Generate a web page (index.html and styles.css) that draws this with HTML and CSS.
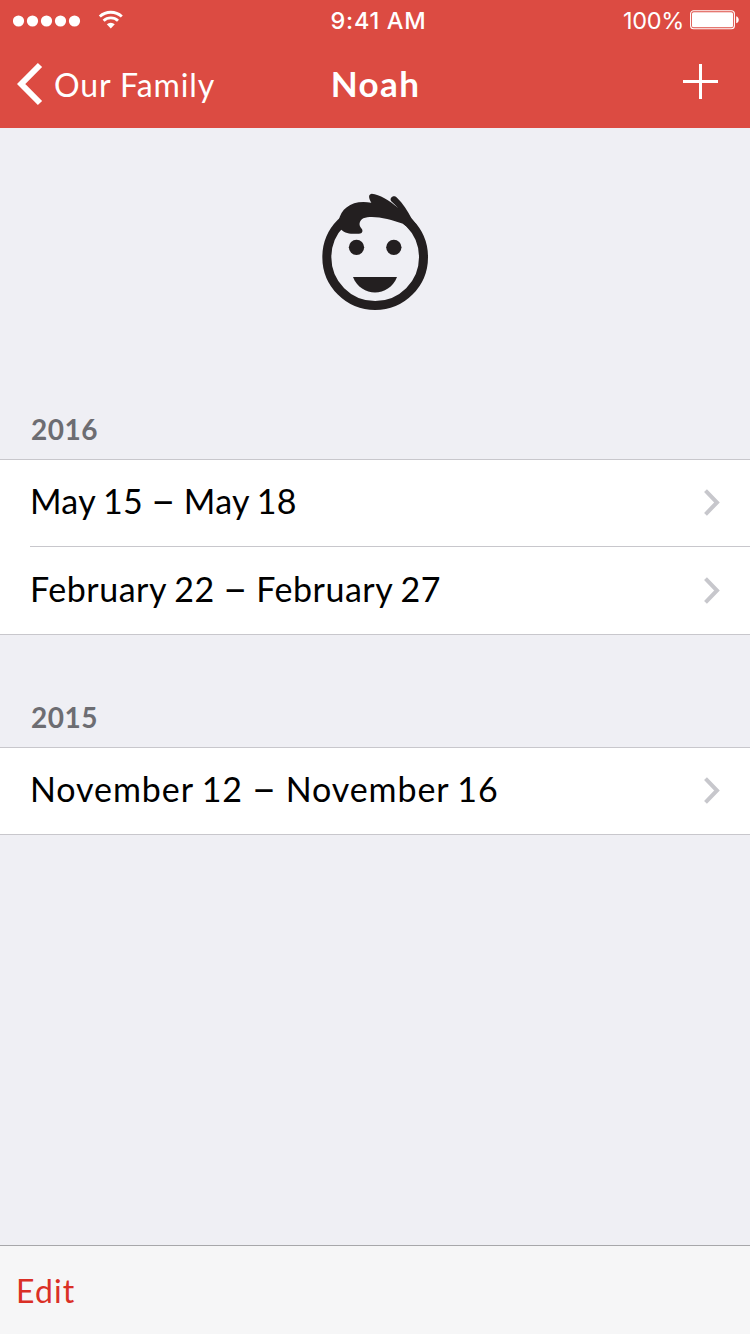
FILE: index.html
```html
<!DOCTYPE html>
<html lang="en">
<head>
    <meta charset="UTF-8">
    <meta name="viewport" content="width=device-width, initial-scale=1.0">
    <title>Noah</title>
    <link rel="stylesheet" href="styles.css">
</head>
<body>

    <header class="header">
        <div class="status-bar">
            <div class="status-left">
                <svg class="signal" width="68" height="12" viewBox="0 0 68 12" fill="#fff">
                    <circle cx="5.5" cy="6" r="5.6"/>
                    <circle cx="19.5" cy="6" r="5.6"/>
                    <circle cx="33.5" cy="6" r="5.6"/>
                    <circle cx="47.5" cy="6" r="5.6"/>
                    <circle cx="61.5" cy="6" r="5.6"/>
                </svg>
                <svg class="wifi" width="26" height="19" viewBox="0 0 26 19" fill="none" stroke="#fff" stroke-width="2.9">
                    <path d="M1.8 6.5 A16.3 16.3 0 0 1 23.8 6.5"/>
                    <path d="M5.6 10.7 A10.6 10.6 0 0 1 20 10.7"/>
                    <path d="M12.8 18.4 L8.8 14.3 A5.8 5.8 0 0 1 16.8 14.3 Z" fill="#fff" stroke="none"/>
                </svg>
            </div>
            <div class="status-time">9:41 AM</div>
            <div class="status-right">
                <span class="percent">100%</span>
                <svg width="50" height="20" viewBox="0 0 50 20">
                    <rect x="0.6" y="0.8" width="43.8" height="17.9" rx="3" fill="none" stroke="#fff" stroke-width="1.1"/>
                    <rect x="2" y="2.2" width="41" height="15.1" rx="1.6" fill="#fff"/>
                    <path d="M46.2 6.2 C49.6 7.2 49.6 12.3 46.2 13.3 Z" fill="#fff"/>
                </svg>
            </div>
        </div>

        <nav class="nav-bar">
            <a class="back">
                <svg width="26" height="44" viewBox="0 0 26 44" fill="none" stroke="#fff" stroke-width="6">
                    <path d="M23 3 L4.2 22 L23 41"/>
                </svg>
                <span class="back-label">Our Family</span>
            </a>
            <h1 class="title">Noah</h1>
            <a class="add">
                <svg width="35" height="35" viewBox="0 0 35 35" fill="#fff">
                    <rect x="0" y="16" width="35" height="3"/>
                    <rect x="16" y="0" width="3" height="35"/>
                </svg>
            </a>
        </nav>
    </header>

    <main class="content">
        <div class="avatar">
            <svg width="130" height="140" viewBox="0 0 390 420" fill="#231f20">
                <circle cx="195.5" cy="231.5" r="145" fill="none" stroke="#231f20" stroke-width="27"/>
                <!-- forehead, clears the ring under the hair -->
                <path d="M100 146 L150 84 L240 84 L280 128 L250 170 L110 170 Z" fill="#efeff4"/>
                <path d="M86 122 C94 82 130 58 184 68 C177 56 173 43 185 41 C209 43 237 60 265 84 L243 63 C238 54 250 43 261 53 C279 70 292 92 304 114 L322 138 L300 148 L279 131 C238 117 188 104 160 115 C147 122 145 137 155 146 C160 153 157 160 147 161 C126 163 105 160 94 149 L76 152 Z"/>
                <circle cx="139.5" cy="202" r="23"/>
                <circle cx="251.5" cy="202" r="23"/>
                <path d="M129 291 H261 C237 353 153 353 129 291 Z"/>
            </svg>
        </div>

        <section class="group">
            <h2 class="group-title">2016</h2>
            <ul class="list">
                <li class="row">
                    <span class="row-label may">May 15 <span class="dash">–</span> May 18</span>
                    <svg class="chevron" width="17" height="27" viewBox="0 0 17 27"><path d="M1.5 1.7 L13 13.5 L1.5 25.3"/></svg>
                </li>
                <li class="row">
                    <span class="row-label february">February 22 <span class="dash">–</span> February 27</span>
                    <svg class="chevron" width="17" height="27" viewBox="0 0 17 27"><path d="M1.5 1.7 L13 13.5 L1.5 25.3"/></svg>
                </li>
            </ul>
        </section>

        <section class="group">
            <h2 class="group-title">2015</h2>
            <ul class="list">
                <li class="row">
                    <span class="row-label november">November 12 <span class="dash">–</span> November 16</span>
                    <svg class="chevron" width="17" height="27" viewBox="0 0 17 27"><path d="M1.5 1.7 L13 13.5 L1.5 25.3"/></svg>
                </li>
            </ul>
        </section>
    </main>

    <footer class="toolbar">
        <a class="edit">Edit</a>
    </footer>

</body>
</html>
```
FILE: styles.css
```css
* {
    box-sizing: border-box;
    margin: 0;
    padding: 0;
}

body {
    display: flex;
    flex-direction: column;
    height: 1334px;
    background-color: #efeff4;
    color: #000000;
    font-family: Lato, "Open Sans", sans-serif;
    overflow: hidden;
}

svg {
    display: block;
}

/* --- HEADER --- */
.header {
    height: 128px;
    background-color: #dc4b42;
    color: #ffffff;
}

.status-bar {
    display: grid;
    grid-template-columns: 1fr auto 1fr;
    align-items: center;
    height: 40px;
    padding: 0 10px 0 13px;
    font-family: Inter, sans-serif;
    line-height: 38px;
}

.status-left {
    display: flex;
    align-items: center;
    gap: 17px;
}

.signal {
    margin-top: 1px;
}

.wifi {
    margin-top: -1px;
}

.status-time {
    font-size: 23.5px;
    font-weight: 500;
    letter-spacing: 0.7px;
    padding: 2px 0 0 4px;
}

.status-right {
    display: flex;
    align-items: center;
    justify-content: flex-end;
    gap: 6px;
}

.percent {
    font-size: 23.5px;
    letter-spacing: -0.3px;
    padding-top: 2px;
}

.nav-bar {
    display: grid;
    grid-template-columns: 1fr auto 1fr;
    align-items: center;
    height: 88px;
    padding: 0 32px 0 17px;
}

.back {
    display: flex;
    align-items: center;
    gap: 11px;
}

.back-label {
    font-size: 32px;
    letter-spacing: 0.9px;
}

.title {
    font-size: 35px;
    font-weight: 700;
    letter-spacing: 1.4px;
    padding: 0 0 3px 16px;
}

.add {
    justify-self: end;
    padding-bottom: 5px;
}

/* --- AVATAR --- */
.content {
    flex: 1;
}

.avatar {
    display: flex;
    justify-content: center;
    height: 259px;
    padding-top: 52px;
}

/* --- LISTS --- */
.group-title {
    height: 72px;
    padding: 24px 0 0 31px;
    color: #6d6d72;
    font-size: 28px;
    font-weight: 700;
    line-height: 36px;
    letter-spacing: 0.5px;
}

.group + .group .group-title {
    height: 112px;
    padding-top: 64px;
}

.list {
    list-style: none;
    background-color: #ffffff;
    border-top: 1px solid #c8c7cc;
    border-bottom: 1px solid #c8c7cc;
}

.row {
    display: flex;
    align-items: center;
    justify-content: space-between;
    height: 86px;
    margin-left: 30px;
    padding-right: 29px;
}

.row + .row {
    height: 88px;
    border-top: 1px solid #c8c7cc;
}

.row-label {
    font-size: 34px;
    line-height: 40px;
    padding-bottom: 4px;
    word-spacing: -1.2px;
}

.may {
    letter-spacing: 0.3px;
}

.february {
    letter-spacing: 0.52px;
}

.november {
    letter-spacing: 0.92px;
}

/* bigger, otherwise the dash is too short */
.dash {
    font-size: 43px;
    line-height: 20px;
    vertical-align: -1px;
}

.chevron {
    fill: none;
    stroke: #c7c7cc;
    stroke-width: 4;
    margin-top: -2px;
}

.row + .row .chevron {
    margin-top: 0;
}

/* --- BOTTOM TOOLBAR --- */
.toolbar {
    display: flex;
    align-items: center;
    height: 89px;
    padding: 0 16px;
    background-color: #f6f6f7;
    border-top: 1px solid #a7a7aa;
}

.edit {
    color: #da2f26;
    font-size: 32px;
    letter-spacing: 1.1px;
}
```
